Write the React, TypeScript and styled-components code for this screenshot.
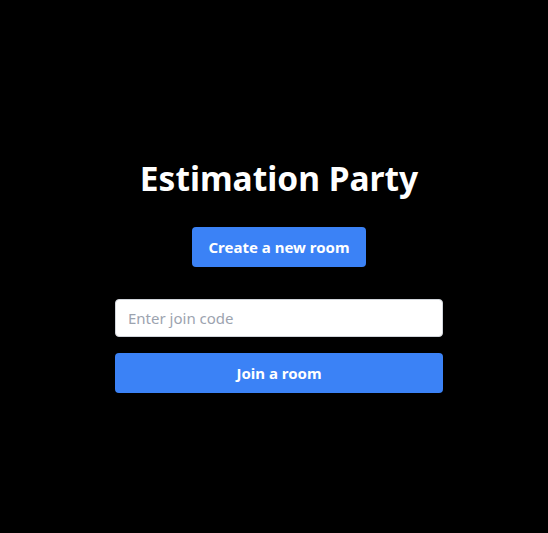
import React from "react";
import styled, { createGlobalStyle } from "styled-components";

const Global = createGlobalStyle`
  html, body { margin: 0; padding: 0; background: #000; }
  body { font-family: "Noto Sans", "Open Sans", sans-serif; }
  * { box-sizing: border-box; }
`;

const Page = styled.main`
  min-height: 533px;
  background: #000;
  display: flex;
  flex-direction: column;
  align-items: center;
  padding: 158px 0 0 10px;
`;

const Title = styled.h1`
  margin: 0 0 29px;
  font-size: 33.5px;
  line-height: 40px;
  font-weight: 700;
  color: #fff;
`;

const Button = styled.button<{ $wide?: boolean }>`
  height: 40px;
  width: ${(p) => (p.$wide ? "328px" : "auto")};
  padding: 0 16px;
  border: none;
  border-radius: 4px;
  background: #3b82f6;
  color: #fff;
  font-family: inherit;
  font-size: 15px;
  font-weight: 700;
  cursor: pointer;
`;

const JoinForm = styled.form`
  margin-top: 32px;
  display: flex;
  flex-direction: column;
  gap: 16px;
  width: 328px;
`;

const Input = styled.input`
  height: 38px;
  width: 100%;
  padding: 0 12px;
  border: 1px solid #d1d5db;
  border-radius: 4px;
  background: #fff;
  font-family: inherit;
  font-size: 15px;
  color: #111827;
  &::placeholder { color: #9ca3af; }
`;

export default function App() {
  return (
    <>
      <Global />
      <Page>
        <Title>Estimation Party</Title>
        <Button type="button">Create a new room</Button>
        <JoinForm onSubmit={(e) => e.preventDefault()}>
          <Input placeholder="Enter join code" />
          <Button $wide type="submit">Join a room</Button>
        </JoinForm>
      </Page>
    </>
  );
}
